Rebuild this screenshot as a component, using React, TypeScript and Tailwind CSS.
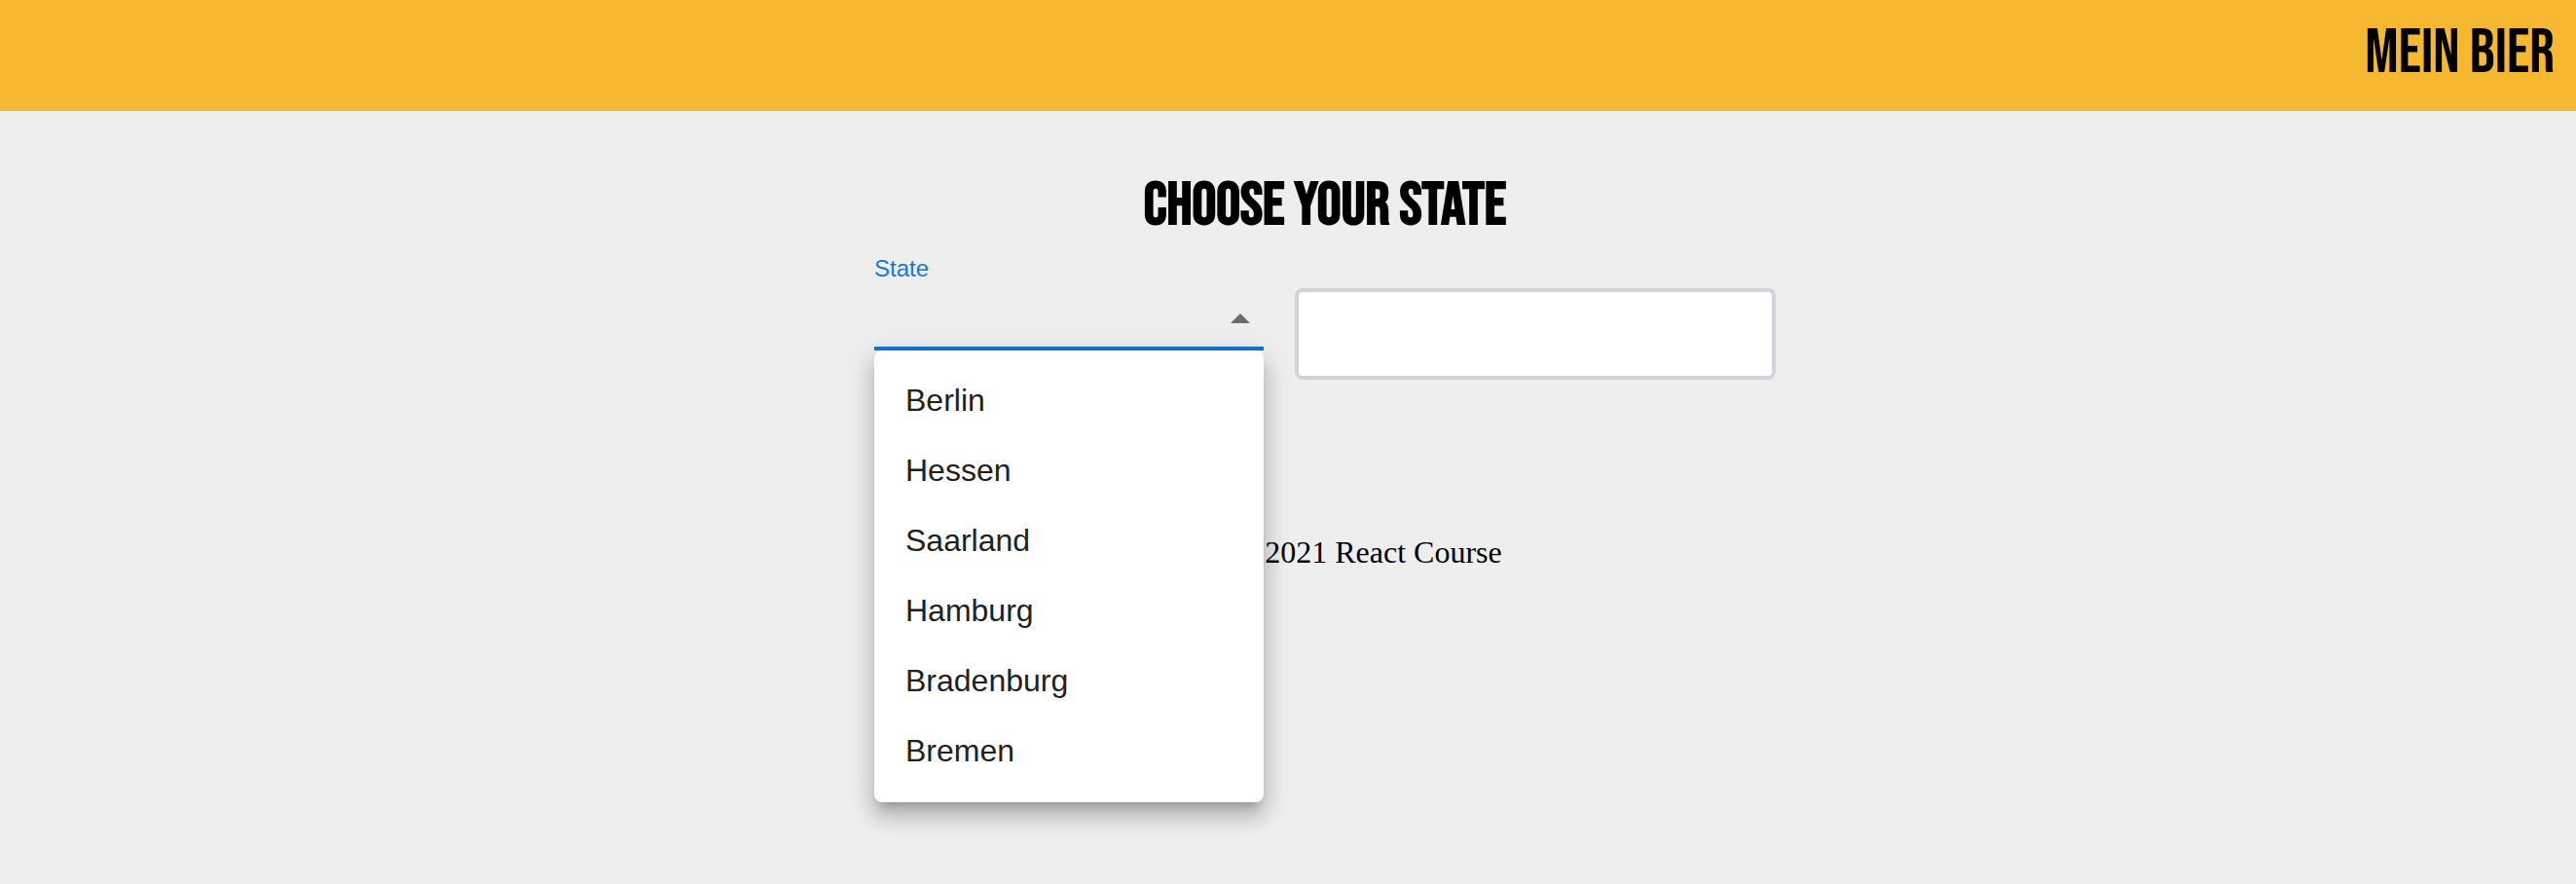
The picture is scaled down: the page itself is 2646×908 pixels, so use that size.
import { useState } from "react";

const states = ["Berlin", "Hessen", "Saarland", "Hamburg", "Bradenburg", "Bremen"];

function Header() {
  return (
    <header className="flex h-[114px] items-center justify-end bg-[#f5b830] px-[22px] pb-1">
      <a
        href="#"
        className="font-['Bebas_Neue','Liberation_Sans',sans-serif] text-[64px] leading-none text-black"
      >
        MEIN BIER
      </a>
    </header>
  );
}

function StateSelect() {
  const [open, setOpen] = useState(true);
  const [value, setValue] = useState("");

  return (
    <div className="relative w-[400px] font-['Liberation_Sans',sans-serif]">
      <label htmlFor="state" className="block text-2xl leading-8 text-[#1976d2]">
        State
      </label>
      <div className="relative">
        <select
          id="state"
          value={value}
          onChange={(e) => setValue(e.target.value)}
          onMouseDown={(e) => {
            e.preventDefault();
            setOpen(!open);
          }}
          className="block h-[68px] w-full appearance-none border-b-4 border-[#1976d2] bg-transparent text-[32px] text-black/87 outline-none"
        >
          <option value="" />
          {states.map((s) => (
            <option key={s}>{s}</option>
          ))}
        </select>
        <svg
          viewBox="0 0 20 10"
          className={
            open
              ? "pointer-events-none absolute top-[30px] right-[14px] h-[10px] w-5"
              : "pointer-events-none absolute top-[30px] right-[14px] h-[10px] w-5 rotate-180"
          }
          aria-hidden="true"
        >
          <path d="M0 10 10 0 20 10z" fill="#6b6b6b" />
        </svg>
      </div>
      {open && (
        <ul className="absolute top-full left-0 z-10 w-full rounded-lg bg-white py-4 shadow-[0_10px_10px_-6px_rgba(0,0,0,0.2),0_16px_20px_2px_rgba(0,0,0,0.14),0_6px_28px_4px_rgba(0,0,0,0.12)]">
          {states.map((s) => (
            <li key={s}>
              <button
                type="button"
                onClick={() => {
                  setValue(s);
                  setOpen(false);
                }}
                className="block h-[72px] w-full px-8 pb-0.5 text-left text-[32px] leading-[70px] text-[#212121] hover:bg-black/4"
              >
                {s}
              </button>
            </li>
          ))}
        </ul>
      )}
    </div>
  );
}

export default function App() {
  return (
    <div className="min-h-screen bg-[#eeeeee]">
      <Header />
      <main className="flex flex-col items-center pt-[62px] pl-[76px]">
        <h1 className="font-['Bebas_Neue','Liberation_Sans',sans-serif] text-[62px] leading-[72px] font-bold text-black">
          CHOOSE YOUR STATE
        </h1>
        <form className="mt-3 flex items-start gap-8">
          <StateSelect />
          <input
            type="text"
            aria-label="City"
            className="mt-9 h-[94px] w-[494px] rounded-lg border-4 border-[#ced4da] bg-white px-6 font-['Liberation_Sans',sans-serif] text-[32px] text-[#495057] outline-none"
          />
        </form>
      </main>
      <footer className="mt-[159px] pl-[196px] text-center font-['Liberation_Serif',serif] text-[32px] leading-9 text-black">
        2021 React Course
      </footer>
    </div>
  );
}
